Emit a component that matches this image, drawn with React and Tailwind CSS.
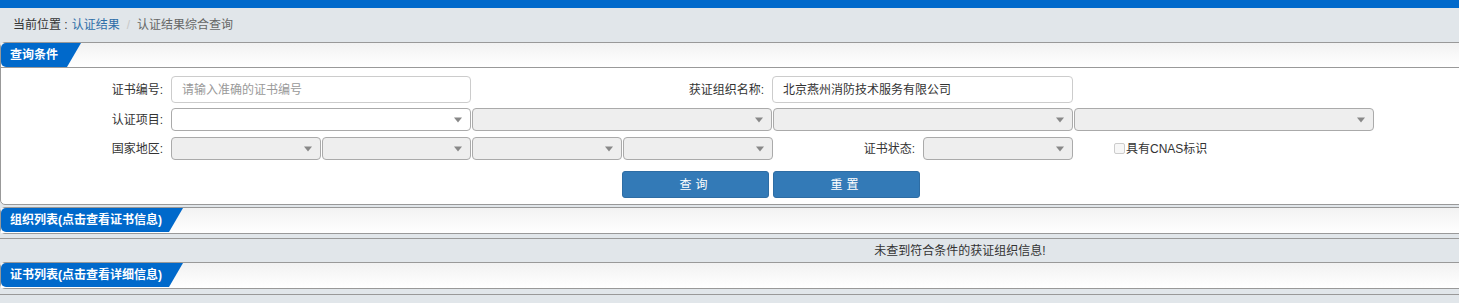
import React from "react";

const FONT = "font-['Liberation_Sans','Noto_Sans_CJK_SC',sans-serif]";

const Arrow = () => (
    <span className="absolute right-[8px] top-1/2 -translate-y-1/2 w-0 h-0 border-l-[4px] border-r-[4px] border-t-[5px] border-l-transparent border-r-transparent border-t-[#888]" />
);

const Select = ({ w = "w-[300px]", white = false, h = "h-[23px]" }) => (
    <div className={`relative ${w} ${h} shrink-0 rounded-[4px] border border-[#aaa] ${white ? "bg-white" : "bg-[#eee]"}`}>
        <Arrow />
    </div>
);

const Label = ({ children, w = "w-[170px]" }) => (
    <div className={`${w} shrink-0 pr-[8px] text-right text-[12px] text-[#333]`}>{children}</div>
);

const PanelHeader = ({ title, tabW, last = false }) => (
    <div className={`h-[25px] bg-gradient-to-b from-[#f2f2f2] to-white flex ${last ? "" : "border-b border-[#999]"}`}>
        <div className={`${tabW} h-[24px] bg-[#0069cb] rounded-l-[5px] [clip-path:polygon(0_0,100%_0,calc(100%-14px)_100%,0_100%)] flex items-center pl-[9px] text-white text-[12px] font-bold`}>
            {title}
        </div>
    </div>
);

const App = () => {
    return (
        <div className={`w-[1459px] h-[303px] overflow-hidden bg-[#e1e6ea] ${FONT}`}>
            <div className="w-[1920px]">
                {/* top bar */}
                <div className="h-[8px] bg-[#0069cb]" />

                {/* breadcrumb */}
                <div className="h-[34px] flex items-center pl-[13px] text-[12px]">
                    <span className="text-[#333]">当前位置 :</span>
                    <span className="text-[#2d6ea8] ml-[4px]">认证结果</span>
                    <span className="text-[#c8c8c8] mx-[7px]">/</span>
                    <span className="text-[#666]">认证结果综合查询</span>
                </div>

                {/* query panel */}
                <div className="bg-white border border-[#999] rounded-l-[5px]">
                    <PanelHeader title="查询条件" tabW="w-[80px]" />
                    <div className="pt-[8px] pb-[6px]">
                        <div className="flex items-center h-[27px]">
                            <Label>证书编号:</Label>
                            <div className="w-[300px] h-[27px] shrink-0 rounded-[4px] border border-[#ccc] flex items-center pl-[10px] text-[12px] text-[#999]">
                                请输入准确的证书编号
                            </div>
                            <Label w="w-[301px]">获证组织名称:</Label>
                            <div className="w-[301px] h-[27px] shrink-0 rounded-[4px] border border-[#ccc] flex items-center pl-[10px] text-[12px] text-[#333]">
                                北京燕州消防技术服务有限公司
                            </div>
                        </div>

                        <div className="flex items-center mt-[5px]">
                            <Label>认证项目:</Label>
                            <Select white />
                            <div className="ml-px"><Select /></div>
                            <div className="ml-px"><Select /></div>
                            <div className="ml-px"><Select /></div>
                        </div>

                        <div className="flex items-center mt-[6px]">
                            <Label>国家地区:</Label>
                            <Select w="w-[150px]" />
                            <div className="ml-px"><Select w="w-[149px]" /></div>
                            <div className="ml-px"><Select w="w-[150px]" /></div>
                            <div className="ml-px"><Select w="w-[150px]" /></div>
                            <Label w="w-[150px]">证书状态:</Label>
                            <Select w="w-[150px]" />
                            <div className="ml-[41px] flex items-center text-[12px] text-[#333]">
                                <span className="w-[11px] h-[11px] border border-[#ccc] rounded-[2px] bg-[#f7f7f7] mr-px" />
                                具有CNAS标识
                            </div>
                        </div>

                        <div className="flex mt-[11px] pl-[621px] gap-[4px]">
                            <button className="w-[147px] h-[27px] rounded-[3px] bg-[#337ab7] border border-[#2e6da4] text-white text-[12px] tracking-[4px]">
                                查询
                            </button>
                            <button className="w-[147px] h-[27px] rounded-[3px] bg-[#337ab7] border border-[#2e6da4] text-white text-[12px] tracking-[4px]">
                                重置
                            </button>
                        </div>
                    </div>
                </div>

                {/* org list panel */}
                <div className="mt-[2px] bg-white border border-[#999] rounded-l-[5px]">
                    <PanelHeader title="组织列表(点击查看证书信息)" tabW="w-[182px]" last />
                </div>
                <div className="mt-[4px] border-t border-[#999] h-[24px] flex items-center justify-center text-[12px] text-[#333]">
                    未查到符合条件的获证组织信息!
                </div>

                {/* cert list panel */}
                <div className="bg-white border border-[#999] rounded-l-[5px]">
                    <PanelHeader title="证书列表(点击查看详细信息)" tabW="w-[182px]" last />
                </div>
                <div className="mt-[5px] border-t border-[#999] h-[20px]" />
            </div>
        </div>
    );
};

export default App;
